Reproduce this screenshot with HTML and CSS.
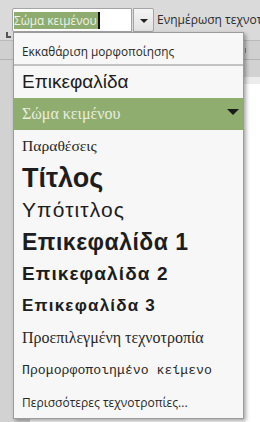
FILE: index.html
```html
<!DOCTYPE html>
<html>
<head>
<meta charset="utf-8">
<title>Τεχνοτροπίες παραγράφου</title>
<link rel="stylesheet" href="styles.css">
</head>
<body>
	<div id="fenetre">
		<div class="barre_outils">
			<span class="poignee"></span>
			<div class="liste_styles">
				<span class="saisie"><span class="selection">Σώμα κειμένου</span><span class="curseur"></span></span>
				<span class="bouton_liste"><span class="fleche"></span></span>
			</div>
			<span class="libelle_maj">Ενημέρωση τεχνοτροπίας</span>
		</div>
		<div class="regle"><span class="coin_regle"></span><span class="repere"></span></div>
		<div class="espace_travail">
			<div class="page"></div>
		</div>
	</div>

	<ul class="menu_styles">
		<li class="ligne ligne_effacer">Εκκαθάριση μορφοποίησης</li>
		<li class="separateur"></li>
		<li class="ligne style_titre_general">Επικεφαλίδα</li>
		<li class="ligne style_corps actif">Σώμα κειμένου<span class="fleche_ligne"></span></li>
		<li class="ligne style_citation">Παραθέσεις</li>
		<li class="ligne style_titre">Τίτλος</li>
		<li class="ligne style_sous_titre">Υπότιτλος</li>
		<li class="ligne style_h1">Επικεφαλίδα 1</li>
		<li class="ligne style_h2">Επικεφαλίδα 2</li>
		<li class="ligne style_h3">Επικεφαλίδα 3</li>
		<li class="ligne style_defaut">Προεπιλεγμένη τεχνοτροπία</li>
		<li class="ligne style_preformate">Προμορφοποιημένο κείμενο</li>
		<li class="ligne ligne_plus">Περισσότερες τεχνοτροπίες...</li>
	</ul>
</body>
</html>
```

FILE: styles.css
```css
	html, body {
		margin: 0;
		padding: 0;
	}

	body {
		width: 260px;
		height: 422px;
		overflow: hidden;
		position: relative;
		background: #d2d2d2;
		font: 11.8px "Open Sans", "DejaVu Sans", sans-serif;
		color: #2b2b2b;
	}

	/* fond : barre d'outils, regle, page */
	#fenetre {
		display: flex;
		flex-direction: column;
		height: 422px;
	}

	.barre_outils {
		height: 41px;
		background: #dadada;
		border-bottom: 1px solid #bababa;
		display: flex;
		align-items: flex-start;
		padding-top: 8px;
		box-sizing: border-box;
		overflow: hidden;
	}

	.poignee {
		width: 2px;
		height: 24px;
		margin: 1px 9px 0 3px;
		background: repeating-linear-gradient(to bottom, #9a9a9a 0, #9a9a9a 2px, transparent 2px, transparent 4px);
	}

	.liste_styles {
		display: flex;
	}

	.saisie {
		display: flex;
		align-items: center;
		width: 117px;
		height: 22px;
		padding-left: 1px;
		background: #fff;
		border: 1px solid #a4a4a4;
		border-radius: 2px 0 0 2px;
	}

	.selection {
		background: #8fac70;
		color: #eef3e6;
		line-height: 17px;
		padding-right: 1px;
	}

	.curseur {
		width: 2px;
		height: 17px;
		background: #111;
	}

	.bouton_liste {
		width: 19px;
		height: 22px;
		margin-left: 1px;
		border: 1px solid #a4a4a4;
		border-radius: 0 2px 2px 0;
		background: linear-gradient(to bottom, #f4f4f4, #e2e2e2);
		display: flex;
		align-items: center;
		justify-content: center;
	}

	.fleche {
		border-left: 4px solid transparent;
		border-right: 4px solid transparent;
		border-top: 4px solid #222;
		margin-top: 1px;
	}

	.libelle_maj {
		margin-left: 3px;
		line-height: 24px;
		white-space: nowrap;
		font-size: 12px;
		color: #2b2b2b;
	}

	.regle {
		height: 18px;
		background: #d0d0d0;
		border-bottom: 1px solid #b4b4b4;
		position: relative;
	}

	.coin_regle {
		position: absolute;
		left: 6px;
		top: -9px;
		width: 3px;
		height: 4px;
		border-left: 2px solid #555;
		border-bottom: 2px solid #555;
	}

	.repere {
		position: absolute;
		left: 245px;
		top: 7px;
		width: 1px;
		height: 5px;
		background: #888;
	}

	.espace_travail {
		flex: 1;
		background: #d2d2d2;
		padding: 17px 0 0 30px;
	}

	.page {
		height: 100%;
		background: #fff;
		border-top: 7px solid #ececec;
	}

	/* menu deroulant des styles */
	.menu_styles {
		position: absolute;
		left: 13px;
		top: 32px;
		width: 229px;
		margin: 0;
		padding: 0;
		list-style: none;
		background: #f7f7f7;
		border: 1px solid #9c9c9c;
		box-shadow: 2px 2px 4px rgba(0,0,0,0.35);
	}

	.ligne {
		height: 32px;
		display: flex;
		align-items: center;
		padding-left: 8px;
		white-space: nowrap;
		color: #272727;
		position: relative;
	}

	.ligne_effacer {
		height: 31px;
		padding-top: 4px;
		box-sizing: border-box;
	}

	.separateur {
		height: 2px;
		background: #c2c2c2;
	}

	.style_titre_general {
		font: 19px "Liberation Sans", Arial, sans-serif;
		color: #1d1d1d;
	}

	.actif {
		background: #8fad6f;
		color: #e9eedf;
		font: 16px "Liberation Serif", "Times New Roman", serif;
	}

	.fleche_ligne {
		position: absolute;
		right: 4px;
		top: 11px;
		border-left: 6px solid transparent;
		border-right: 6px solid transparent;
		border-top: 6px solid #1a1a1a;
	}

	.style_citation {
		font: 15.6px "Liberation Serif", "Times New Roman", serif;
	}

	.style_titre {
		font: bold 27px "Liberation Sans", Arial, sans-serif;
		color: #1d1d1d;
	}

	.style_sous_titre {
		font: 21px "Liberation Sans", Arial, sans-serif;
		letter-spacing: 1.1px;
		color: #1d1d1d;
	}

	.style_h1 {
		font: bold 23px "Liberation Sans", Arial, sans-serif;
		letter-spacing: 0.5px;
		color: #1d1d1d;
	}

	.style_h2 {
		font: bold 19px "Liberation Sans", Arial, sans-serif;
		letter-spacing: 1.1px;
		color: #1d1d1d;
	}

	.style_h3 {
		font: bold 17px "Liberation Sans", Arial, sans-serif;
		letter-spacing: 1.2px;
		color: #1d1d1d;
	}

	.style_defaut {
		font: 16px "Liberation Serif", "Times New Roman", serif;
	}

	.style_preformate {
		font: 13.2px "Liberation Mono", "Courier New", monospace;
	}

	.ligne_plus {
		font-size: 12px;
	}
```
